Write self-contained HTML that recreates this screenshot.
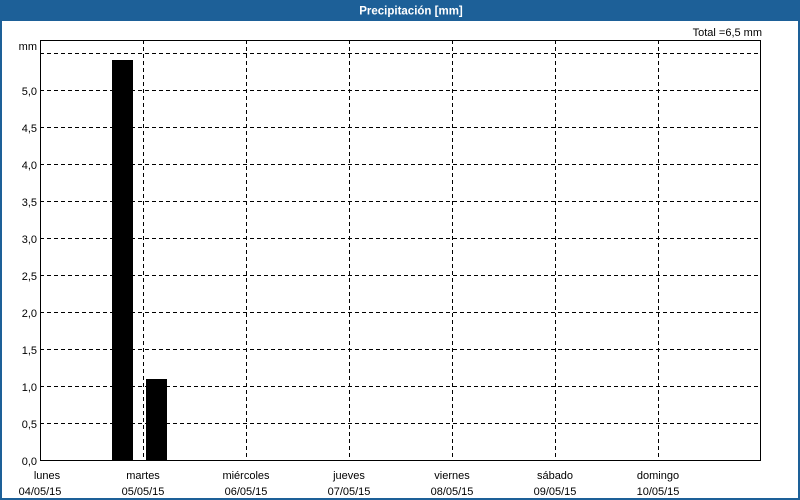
<!DOCTYPE html>
<html><head><meta charset="utf-8"><style>
html,body{margin:0;padding:0;background:#fff;}
svg{display:block;font-family:"Liberation Sans",sans-serif;}
</style></head><body>
<svg width="800" height="500" xmlns="http://www.w3.org/2000/svg">
<rect x="0" y="0" width="800" height="500" fill="#1d6098"/>
<rect x="2" y="21" width="796" height="477" fill="#fff"/>
<text x="411" y="14.5" fill="#fff" font-size="11.5" font-weight="bold" text-anchor="middle">Precipitación [mm]</text>
<text x="762" y="36" fill="#000" font-size="11" text-anchor="end">Total =6,5 mm</text>
<text x="37" y="50" font-size="11" text-anchor="end">mm</text>
<g stroke="#000" stroke-width="1" stroke-dasharray="4,3" fill="none">
<line x1="40" y1="53.5" x2="761" y2="53.5"/>
<line x1="40" y1="90.5" x2="761" y2="90.5"/>
<line x1="40" y1="127.5" x2="761" y2="127.5"/>
<line x1="40" y1="164.5" x2="761" y2="164.5"/>
<line x1="40" y1="201.5" x2="761" y2="201.5"/>
<line x1="40" y1="238.5" x2="761" y2="238.5"/>
<line x1="40" y1="275.5" x2="761" y2="275.5"/>
<line x1="40" y1="312.5" x2="761" y2="312.5"/>
<line x1="40" y1="349.5" x2="761" y2="349.5"/>
<line x1="40" y1="386.5" x2="761" y2="386.5"/>
<line x1="40" y1="423.5" x2="761" y2="423.5"/>
<line x1="143.5" y1="40" x2="143.5" y2="460"/>
<line x1="246.5" y1="40" x2="246.5" y2="460"/>
<line x1="349.5" y1="40" x2="349.5" y2="460"/>
<line x1="452.5" y1="40" x2="452.5" y2="460"/>
<line x1="555.5" y1="40" x2="555.5" y2="460"/>
<line x1="658.5" y1="40" x2="658.5" y2="460"/>
</g>
<rect x="112" y="60" width="21" height="400" fill="#000"/>
<rect x="146" y="379" width="21" height="81" fill="#000"/>
<rect x="40.5" y="40.5" width="720" height="420" fill="none" stroke="#000"/>
<g font-size="11" text-anchor="end" fill="#000">
<text x="37" y="95">5,0</text>
<text x="37" y="132">4,5</text>
<text x="37" y="169">4,0</text>
<text x="37" y="206">3,5</text>
<text x="37" y="243">3,0</text>
<text x="37" y="280">2,5</text>
<text x="37" y="317">2,0</text>
<text x="37" y="354">1,5</text>
<text x="37" y="391">1,0</text>
<text x="37" y="428">0,5</text>
<text x="37" y="465">0,0</text>
</g>
<g font-size="11" text-anchor="middle" fill="#000">
<text x="47" y="479">lunes</text><text x="40" y="495">04/05/15</text>
<text x="143" y="479">martes</text><text x="143" y="495">05/05/15</text>
<text x="246" y="479">miércoles</text><text x="246" y="495">06/05/15</text>
<text x="349" y="479">jueves</text><text x="349" y="495">07/05/15</text>
<text x="452" y="479">viernes</text><text x="452" y="495">08/05/15</text>
<text x="555" y="479">sábado</text><text x="555" y="495">09/05/15</text>
<text x="658" y="479">domingo</text><text x="658" y="495">10/05/15</text>
</g>
</svg>
</body></html>
